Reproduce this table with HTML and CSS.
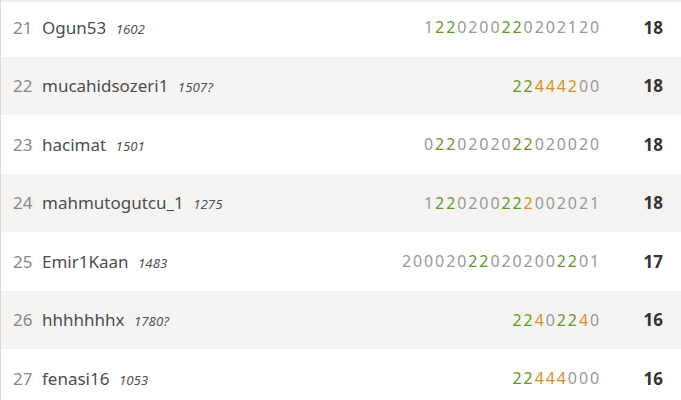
FILE: index.html
```html
<!DOCTYPE html>
<html lang="en">
<head>
    <meta charset="UTF-8">
    <title>Arena standings</title>
    <link rel="stylesheet" href="styles.css">
</head>
<body>
    <div class="standing">
        <table class="slist">
            <tbody>
                <tr>
                    <td class="rank">21</td>
                    <td class="player">Ogun53 <em class="rating">1602</em></td>
                    <td class="sheet"><s>1</s><d>2</d><d>2</d><s>0</s><s>2</s><s>0</s><s>0</s><d>2</d><d>2</d><s>0</s><s>2</s><s>0</s><s>2</s><s>1</s><s>2</s><s>0</s></td>
                    <td class="total">18</td>
                </tr>
                <tr>
                    <td class="rank">22</td>
                    <td class="player">mucahidsozeri1 <em class="rating">1507?</em></td>
                    <td class="sheet"><d>2</d><d>2</d><f>4</f><f>4</f><f>4</f><f>2</f><s>0</s><s>0</s></td>
                    <td class="total">18</td>
                </tr>
                <tr>
                    <td class="rank">23</td>
                    <td class="player">hacimat <em class="rating">1501</em></td>
                    <td class="sheet"><s>0</s><d>2</d><d>2</d><s>0</s><s>2</s><s>0</s><s>2</s><s>0</s><d>2</d><d>2</d><s>0</s><s>2</s><s>0</s><s>0</s><s>2</s><s>0</s></td>
                    <td class="total">18</td>
                </tr>
                <tr>
                    <td class="rank">24</td>
                    <td class="player">mahmutogutcu_1 <em class="rating">1275</em></td>
                    <td class="sheet"><s>1</s><d>2</d><d>2</d><s>0</s><s>2</s><s>0</s><s>0</s><d>2</d><d>2</d><f>2</f><s>0</s><s>0</s><s>2</s><s>0</s><s>2</s><s>1</s></td>
                    <td class="total">18</td>
                </tr>
                <tr>
                    <td class="rank">25</td>
                    <td class="player">Emir1Kaan <em class="rating">1483</em></td>
                    <td class="sheet"><s>2</s><s>0</s><s>0</s><s>0</s><s>2</s><s>0</s><d>2</d><d>2</d><s>0</s><s>2</s><s>0</s><s>2</s><s>0</s><s>0</s><d>2</d><d>2</d><s>0</s><s>1</s></td>
                    <td class="total">17</td>
                </tr>
                <tr>
                    <td class="rank">26</td>
                    <td class="player">hhhhhhhx <em class="rating">1780?</em></td>
                    <td class="sheet"><d>2</d><d>2</d><f>4</f><s>0</s><d>2</d><d>2</d><f>4</f><s>0</s></td>
                    <td class="total">16</td>
                </tr>
                <tr>
                    <td class="rank">27</td>
                    <td class="player">fenasi16 <em class="rating">1053</em></td>
                    <td class="sheet"><d>2</d><d>2</d><f>4</f><f>4</f><f>4</f><s>0</s><s>0</s><s>0</s></td>
                    <td class="total">16</td>
                </tr>
            </tbody>
        </table>
    </div>
</body>
</html>
```

FILE: styles.css
```css
/* --- base --- */
body {
    margin: 0;
    background: #fff;
    font-family: 'Noto Sans', sans-serif;
    color: #4d4d4d;
    overflow: hidden;
}

.standing {
    position: relative;
    border-left: 1px solid #d9d9d9;
    margin-top: -2px;
}

/* sombra no topo da lista */
.standing::before {
    content: '';
    position: absolute;
    top: 2px;
    left: 0;
    right: 0;
    height: 3px;
    background: linear-gradient(to bottom, rgba(0, 0, 0, 0.09), rgba(0, 0, 0, 0));
}

.slist {
    width: 100%;
    border-collapse: collapse;
}

.slist tr {
    height: 58.5px;
}

.slist tr:nth-child(even) {
    background: #f5f4f2;
}

.slist td {
    padding: 0;
    vertical-align: middle;
}

.rank {
    width: 29px;
    padding-left: 12px !important;
    font-size: 17px;
    color: #888;
}

.player {
    font-size: 17px;
    color: #4d4d4d;
    white-space: nowrap;
}

.rating {
    font-size: 13.3px;
    color: #555;
    margin-left: 5px;
}

/* --- folha de pontos --- */
.sheet {
    text-align: right;
    font-size: 16px;
    letter-spacing: 1.9px;
    color: #999;
    white-space: nowrap;
}

.sheet s {
    text-decoration: none;
}

.sheet d {
    color: #629924;
}

.sheet f {
    color: #d59120;
}

.total {
    width: 62px;
    padding-right: 18px !important;
    text-align: right;
    font-size: 17px;
    font-weight: 700;
    color: #333;
}
```
